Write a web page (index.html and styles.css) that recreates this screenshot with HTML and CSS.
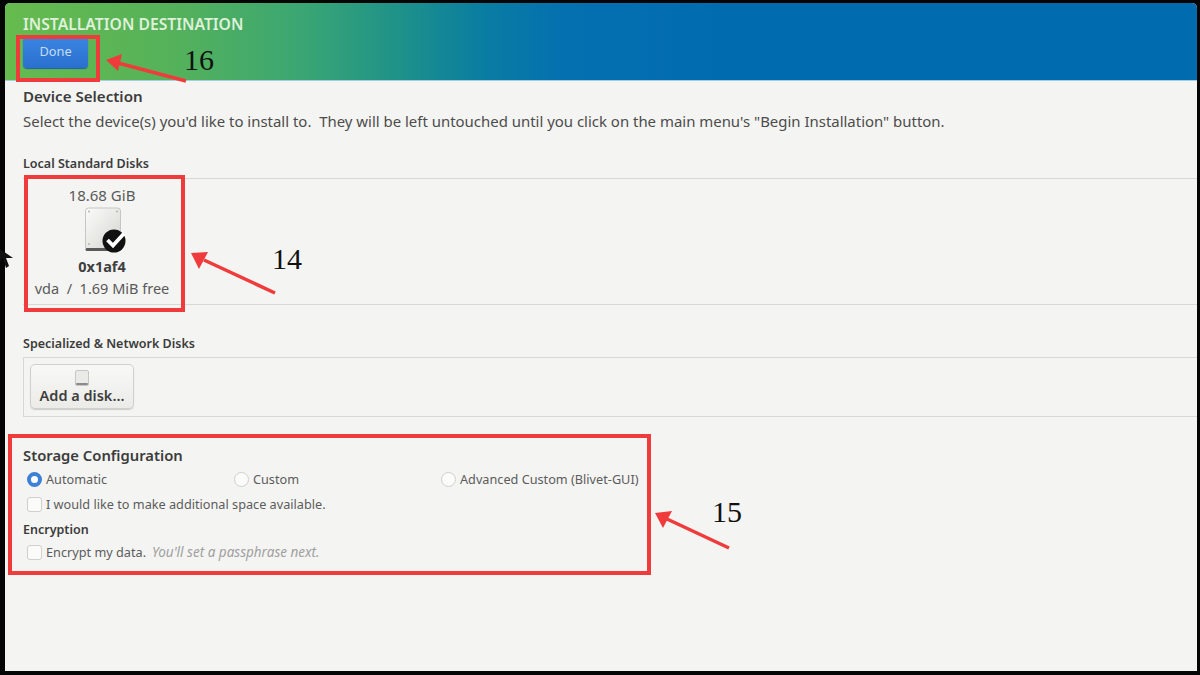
FILE: index.html
```html
<!DOCTYPE html>
<html lang="en">
<head>
<meta charset="utf-8">
<title>Installation Destination</title>
<link rel="stylesheet" href="styles.css">
</head>
<body>
<div class="screen">
  <header class="topbar">
    <div class="topbar-title">INSTALLATION DESTINATION</div>
    <button class="done">Done</button>
  </header>
  <main class="content">
    <h2 class="h-main device">Device Selection</h2>
    <p class="hint">Select the device(s) you'd like to install to.&nbsp; They will be left untouched until you click on the main menu's "Begin Installation" button.</p>
    <h3 class="h-sub local">Local Standard Disks</h3>
    <section class="disk-panel">
      <div class="disk">
        <div class="disk-size">18.68 GiB</div>
        <svg class="disk-icon" width="42" height="48" viewBox="0 0 42 48">
          <defs>
            <linearGradient id="dg" x1="0" y1="0" x2="1" y2="1">
              <stop offset="0" stop-color="#fbfbf9"/>
              <stop offset="0.55" stop-color="#e6e6e3"/>
              <stop offset="1" stop-color="#cfcfcb"/>
            </linearGradient>
          </defs>
          <rect x="0.500" y="1" width="35" height="42" rx="3" fill="url(#dg)" stroke="#c6c6c2"/>
          <rect x="0.500" y="41" width="35" height="3" rx="1.500" fill="#5a5a5a"/>
          <circle cx="4" cy="4.500" r="1" fill="#b4b4b0"/>
          <circle cx="32" cy="4.500" r="1" fill="#b4b4b0"/>
          <circle cx="4" cy="37" r="1" fill="#b4b4b0"/>
          <circle cx="29" cy="34" r="11.500" fill="#111"/>
          <path d="M22.500 33l5.500 5.500 11-12" fill="none" stroke="#fff" stroke-width="3.800"/>
        </svg>
        <div class="disk-name">0x1af4</div>
        <div class="disk-free">vda&nbsp; /&nbsp; 1.69 MiB free</div>
      </div>
    </section>
    <h3 class="h-sub special">Specialized &amp; Network Disks</h3>
    <section class="add-panel">
      <button class="add-disk">
        <svg class="add-icon" width="14" height="16" viewBox="0 0 14 16">
          <rect x="0.500" y="0.500" width="13" height="15" rx="1.500" fill="#eaeae7" stroke="#c6c6c2"/>
          <rect x="1" y="13" width="12" height="2" rx="1" fill="#8a8a8c"/>
        </svg>
        <span>Add a disk...</span>
      </button>
    </section>
    <h2 class="h-main storage">Storage Configuration</h2>
    <div class="radio-row">
      <label class="opt opt-auto"><span class="radio on"></span>Automatic</label>
      <label class="opt opt-custom"><span class="radio"></span>Custom</label>
      <label class="opt"><span class="radio"></span>Advanced Custom (Blivet-GUI)</label>
    </div>
    <label class="opt check-row"><span class="check"></span>I would like to make additional space available.</label>
    <h3 class="h-sub enc">Encryption</h3>
    <label class="opt check-row"><span class="check"></span>Encrypt my data.<em class="note">You'll set a passphrase next.</em></label>
  </main>
</div>

<div class="mark mark-16"></div>
<div class="mark mark-14"></div>
<div class="mark mark-15"></div>
<svg class="arrows" width="1200" height="675" viewBox="0 0 1200 675">
  <g stroke="#ef3b3b" stroke-width="3.500" fill="none">
    <path d="M186 81L118 63"/>
    <path d="M275 293L204 260"/>
    <path d="M729 548L667 519"/>
  </g>
  <g fill="#ef3b3b">
    <path d="M106 60L122 54L118 71Z"/>
    <path d="M191 253L208 252L199 269Z"/>
    <path d="M655 513L672 511L663 528Z"/>
  </g>
  <path d="M0 249L0 262L3 258L6 268L9 266L6 258L13 258Z" fill="#111"/>
</svg>
<div class="num num-16">16</div>
<div class="num num-14">14</div>
<div class="num num-15">15</div>
</body>
</html>
```
FILE: styles.css
```css
html, body {
  margin: 0;
  padding: 0;
  width: 1200px;
  height: 675px;
  overflow: hidden;
  background: #050505;
  font-family: "Noto Sans", "Open Sans", sans-serif;
}
body {
  padding: 3px 3px 4px 5px;
  box-sizing: border-box;
  position: relative;
}
.screen {
  height: 668px;
  background: #f4f4f2;
  display: flex;
  flex-direction: column;
  border-radius: 5px 5px 0 0;
  overflow: hidden;
}
.topbar {
  height: 78px;
  flex: none;
  box-sizing: border-box;
  padding: 13px 0 0 18px;
  background: linear-gradient(90deg, #66bb4e 0%, #55b25a 14%, #3aa673 25%, #1b8f8c 34%, #0a7da2 40%, #0470b0 47%, #016bb0 60%, #016bb0 100%);
  border-bottom: 1px solid #a4cfe2;
}
.topbar-title {
  font-size: 15.700px;
  line-height: 16px;
  font-weight: 600;
  color: #dff0da;
}
.done {
  display: block;
  margin: 4px 0 0 0;
  width: 65px;
  height: 32px;
  padding: 0 0 3px;
  border: 0;
  border-radius: 4px;
  background: linear-gradient(#3b86e2, #2a70cf);
  box-shadow: 0 1px 1px #1e5fa8;
  color: #c8dcf4;
  font: 12.800px "Noto Sans", sans-serif;
}
.content {
  flex: 1;
  padding: 6px 0 0 18px;
  color: #555;
}
.h-main {
  margin: 0;
  font-size: 14.800px;
  line-height: 18px;
  font-weight: 600;
  color: #3c3c3c;
}
.device {
  font-size: 15.100px;
}
.hint {
  margin: 7px 0 0;
  font-size: 14.950px;
  line-height: 18px;
  color: #4c4c4c;
}
.h-sub {
  margin: 0;
  font-size: 12.500px;
  line-height: 15px;
  font-weight: 600;
  color: #3c3c3c;
}
.local {
  margin-top: 26px;
}
.disk-panel {
  margin-top: 7px;
  height: 125px;
  border-top: 1px solid #d8d8d5;
  border-bottom: 1px solid #d8d8d5;
  display: flex;
}
.disk {
  width: 158px;
  text-align: center;
  padding-top: 7px;
  font-size: 14.500px;
  line-height: 18px;
  color: #5a5a5a;
}
.disk-size {
  font-size: 15px;
}
.disk-icon {
  display: block;
  margin: 3px auto 0 62px;
}
.disk-name {
  margin-top: 2px;
  font-weight: 700;
  color: #3f3f3f;
}
.disk-free {
  margin-top: 4px;
}
.special {
  margin-top: 31px;
}
.add-panel {
  margin-top: 6px;
  height: 52px;
  border: 1px solid #d8d8d5;
  border-right: 0;
  display: flex;
  align-items: flex-start;
  padding: 6px 0 0 6px;
}
.add-disk {
  width: 104px;
  height: 45px;
  padding: 5px 0 0;
  border: 1px solid #d0d0cc;
  border-radius: 5px;
  background: linear-gradient(#f8f8f6, #ebebe8);
  box-shadow: 0 1px 1px #ccc;
  display: flex;
  flex-direction: column;
  align-items: center;
  font: 600 14.500px/18px "Noto Sans", sans-serif;
  color: #3e3e3e;
}
.add-icon {
  display: block;
}
.storage {
  margin-top: 29px;
}
.radio-row {
  display: flex;
  margin-top: 6px;
}
.opt {
  display: flex;
  align-items: center;
  gap: 4px;
  font-size: 12.700px;
  line-height: 18px;
  color: #5c5c5c;
}
.opt-auto {
  width: 207px;
  margin-left: 4px;
}
.opt-custom {
  width: 207px;
}
.radio {
  width: 15px;
  height: 15px;
  box-sizing: border-box;
  border: 1px solid #cfcfcc;
  border-radius: 50%;
  background: #fbfbfa;
}
.radio.on {
  border: 4px solid #3d80d6;
  background: #fff;
}
.check-row {
  margin: 7px 0 0 4px;
}
.check {
  width: 15px;
  height: 15px;
  box-sizing: border-box;
  border: 1px solid #cfcfcc;
  border-radius: 3px;
  background: #fbfbfa;
}
.enc {
  margin-top: 9px;
}
.enc + .check-row {
  margin-top: 6px;
}
.note {
  margin-left: 2px;
  font-size: 13.500px;
  color: #a0a0a0;
}
.mark {
  position: absolute;
  box-sizing: border-box;
  border: 4px solid #ef3b3b;
}
.mark-16 {
  left: 16px;
  top: 35px;
  width: 84px;
  height: 47px;
}
.mark-14 {
  left: 24px;
  top: 175px;
  width: 161px;
  height: 137px;
}
.mark-15 {
  left: 8px;
  top: 434px;
  width: 643px;
  height: 141px;
}
.arrows {
  position: absolute;
  left: 0;
  top: 0;
}
.num {
  position: absolute;
  font-family: "Liberation Serif", serif;
  font-size: 30px;
  line-height: 34px;
  color: #111;
}
.num-16 {
  left: 184px;
  top: 43px;
}
.num-14 {
  left: 272px;
  top: 242px;
}
.num-15 {
  left: 712px;
  top: 495px;
}
```
